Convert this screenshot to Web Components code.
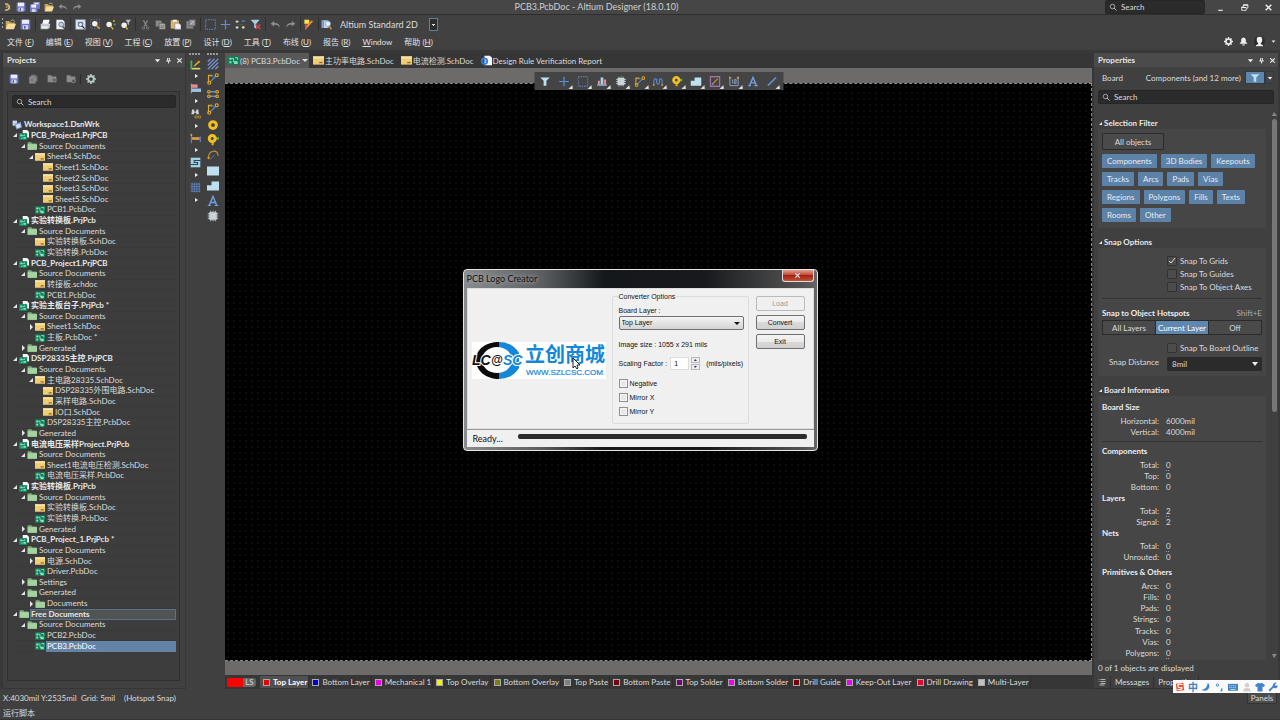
<!DOCTYPE html>
<html lang="zh">
<head>
<meta charset="utf-8">
<title>PCB3.PcbDoc - Altium Designer (18.0.10)</title>
<style>
html,body{margin:0;height:100%;background:#404040}
body{font:8px/10px Lato,"Noto Sans CJK SC",sans-serif;color:#dcdcdc;overflow:hidden}
</style>
</head>
<body>
<ad-app></ad-app>
<script>
const base = `*{box-sizing:border-box}
button,input,select{font:inherit;color:inherit;background:none;border:0;padding:0;margin:0;border-radius:0}
:focus{outline:none}
button{display:flex;align-items:center;justify-content:center;white-space:nowrap}`;

function define(name, css, html) {
  customElements.define(name, class extends HTMLElement {
    constructor() {
      super();
      this.attachShadow({ mode: 'open' });
    }
    connectedCallback() {
      const body = typeof html === 'function' ? html(this) : html;
      this.shadowRoot.innerHTML = `<style>${base}${css}</style>${body}`;
    }
  });
}

const Y = '#e8a91c', B = '#5b8fd6', L = '#bfe0ee', W = '#f0f0f0', G = '#8d8d8d';
const icons = {
  logo: `<path d="M4 2h5l4 4v5l-4 3H4l2-3h3l1-2V7L8 5H6z" fill="#cdb56c"/><path d="M6 7h3v2H6z" fill="#cdb56c"/>`,
  save: `<path d="M1 1h14v14H1z" fill="#6f74c8"/><path d="M3 1h10v6H3z" fill="#eceefa"/><path d="M4 9h8v6H4z" fill="#d3d6ee"/><path d="M6 10h2v4H6z" fill="#4a4e96"/>`,
  saveall: `<path d="M5 0h11v11H5z" fill="#6f74c8"/><path d="M7 1h7v3H7z" fill="#dfe2f5"/><path d="M0 4h12v12H0z" fill="#6f74c8"/><path d="M2 4h8v5H2z" fill="#eceefa"/><path d="M3 11h6v5H3z" fill="#d3d6ee"/>`,
  open: `<path d="M1 3h5l2 2h6v3H5l-3 6H1z" fill="#c9a55b"/><path d="M4 7h12l-3 8H1z" fill="#f5dc98"/><path d="M8 3q4-4 6 1" stroke="#d8d8d8" fill="none"/>`,
  undo: `<path d="M6 3 1 7l5 4V8.500q6-1 8 4.500 1-7-8-7.500z" fill="${G}"/>`,
  redo: `<path d="M10 3l5 4-5 4V8.500q-6-1-8 4.500-1-7 8-7.500z" fill="${G}"/>`,
  print: `<path d="M5 1h9l-2 7H3z" fill="#fafafa"/><path d="M1 7h14l-1 6-3 2H1z" fill="#c3c8d3"/><path d="M2 11h9v2H2z" fill="#f7f7f7"/>`,
  preview: `<path d="M2 1h9l3 3v11H2z" fill="#f0f2f8"/><circle cx="9" cy="8" r="3.500" fill="#b9d3ef" stroke="#555"/><path d="m11 11 4 4" stroke="#444" stroke-width="2"/>`,
  zoomdoc: `<path d="M1 1h14v14H1z" fill="#e7ecf5" stroke="#7e9cc4"/><path d="M4 4h8v7H4z" fill="#6f8fb8"/><circle cx="8" cy="8" r="3" fill="#dcebfa" stroke="#456"/><path d="m10 10 4 4" stroke="#333" stroke-width="2"/>`,
  zoomarea: `<path d="M1 1h13v13H1z" fill="none" stroke="#6c8fd0" stroke-dasharray="2"/><circle cx="7" cy="7" r="4" fill="${W}"/><path d="m9 9 5 5" stroke="#e2b04a" stroke-width="2"/>`,
  zoomsel: `<circle cx="6" cy="8" r="4" fill="${W}"/><path d="m8 10 4 5" stroke="#e2b04a" stroke-width="2"/><circle cx="13" cy="3" r="1.500" fill="${Y}"/><circle cx="14" cy="8" r="1.500" fill="#5a5"/>`,
  zoomfil: `<circle cx="6" cy="9" r="4" fill="${W}"/><path d="m8 11 3 4" stroke="#e2b04a" stroke-width="2"/><path d="M8 1h8l-3 4v4l-2-2V5z" fill="#b9bfc8"/>`,
  cut: `<path d="m5 2 5 9m1-9-5 9" stroke="${G}" stroke-width="1.500"/><circle cx="5" cy="13" r="1.800" fill="none" stroke="${G}"/><circle cx="11" cy="13" r="1.800" fill="none" stroke="${G}"/>`,
  copy: `<path d="M1 2h7l2 2v7H1z" fill="#8a8a8a"/><path d="M6 6h7l2 2v7H6z" fill="#aaa" stroke="#555"/><path d="M8 10h5M8 12h5" stroke="#666"/>`,
  paste: `<path d="M1 2h12v12H1z" fill="#ddb567"/><path d="M4 1h6v3H4z" fill="#eee"/><path d="M7 6h6l3 3v6H7z" fill="#f2f4fa" stroke="#889"/>`,
  stamp: `<path d="M2 3h10v11H2z" fill="#858585"/><path d="M6 1h9v9H6z" fill="#999" stroke="#555"/><path d="m8 8 5-5" stroke="#ddd"/>`,
  selrect: `<path d="M1 1h14v14H1z" fill="none" stroke="#6487cf" stroke-width="1.500" stroke-dasharray="2 1.500"/>`,
  cross: `<path d="M8 1v14M1 8h14" stroke="${B}" stroke-width="1.800"/>`,
  xsel: `<path d="M3 2v3M3 11v3M1 4h4M1 12h4" stroke="#ddd" stroke-width="2"/><path d="M10 3h4M12 11v3" stroke="${B}" stroke-width="2"/><circle cx="12" cy="12" r="2" fill="#d8cf7a"/><path d="M4 8h7" stroke="#7a7" stroke-dasharray="1 2"/>`,
  clearfil: `<path d="M1 1h13L9 7v7l-3-2V7z" fill="#a9cbe0"/><path d="m8 8 7 7m0-7-7 7" stroke="#d8434a" stroke-width="2"/>`,
  marker: `<path d="M2 1h7v6H2z" fill="#ffe14a"/><path d="M15 3 7 12l-4 4 1-6 8-8z" fill="#ee8a3a"/><path d="m3 8 3 4" stroke="#e35b4b" stroke-width="2"/>`,
  browse: `<path d="M1 2h10v11H1z" fill="#cfdcf0"/><path d="M3 2v11" stroke="#557fc0" stroke-width="2"/><circle cx="10" cy="7" r="4" fill="#e6f1fb" stroke="#6b87aa"/><path d="m12 10 3 5" stroke="#e2903a" stroke-width="2"/>`,
  search: `<circle cx="7" cy="7" r="4.500" fill="none" stroke="#c8c8c8" stroke-width="1.500"/><path d="m10 10 5 5" stroke="#c8c8c8" stroke-width="1.800"/>`,
  min: `<path d="M4 12h8v2H4z" fill="${W}"/>`,
  restore: `<path d="M6 3h8v6h-3v4H3V7h3z" fill="none" stroke="${W}" stroke-width="1.500"/><path d="M6 3h8v2H6zM3 7h8v2H3z" fill="${W}"/>`,
  close: `<path d="m3 3 10 10M13 3 3 13" stroke="${W}" stroke-width="2.500"/>`,
  gear: `<circle cx="8" cy="8" r="4.500" fill="none" stroke="currentColor" stroke-width="3"/><path d="M8 0v3M8 13v3M0 8h3M13 8h3M2.500 2.500l2 2M11.500 11.500l2 2M13.500 2.500l-2 2M4.500 11.500l-2 2" stroke="currentColor" stroke-width="2.500"/>`,
  bell: `<path d="M8 1q5 1 4 7l3 4H1l3-4Q3 2 8 1z" fill="${W}"/><path d="M6 13h4v2H6z" fill="${W}"/>`,
  user: `<circle cx="8" cy="8" r="8" fill="#2c2c2c"/><path d="M8 1q4.500 0 4 5 0 3-2 4v2l3 1v2H3v-2l3-1v-2Q4 9 4 6 3.500 1 8 1z" fill="${W}"/>`,
  pin: `<path d="M5 2h6v6h2v2H9v5H7v-5H3V8h2z" fill="${W}"/><path d="M7 3h2v5H7z" fill="#555"/>`,
  down: `<path d="M2 5h12l-6 7z" fill="${W}"/>`,
  docs: `<path d="M5 1h7l3 3v8H5z" fill="#777"/><path d="M2 4h7l3 3v8H2z" fill="${G}"/><path d="M4 8h5M4 11h5" stroke="#555"/>`,
  folderx: `<path d="M1 2h6l1 2h7v9H1z" fill="#8b8b8b"/><path d="m8 9 4-3v2h4v3h-4v2z" fill="#666"/>`,
  folderm: `<path d="M1 2h6l1 2h7v9H1z" fill="#8b8b8b"/><circle cx="12" cy="11" r="3" fill="#555" stroke="#999"/>`,
  work: `<path d="M1 1h7v8H1z" fill="#cdd7ee"/><path d="m4 6 10-3 2 9-9 3z" fill="#7f9bd0"/><path d="m6 8 7-2 1 5-6 2z" fill="#d9e4f7"/>`,
  project: `<path d="M6 0h7l3 3v9H6z" fill="#f4f6f5"/><path d="M0 5h13v11H0z" fill="#0f8a5f"/><path d="M2 7h3v3H2zM7 11h4v3H7z" fill="#8fe0bb"/><path d="M5 9h4V7M3 13h3" stroke="#d4f5e5" fill="none"/>`,
  pcb: `<path d="M0 2h16v12H0z" fill="#0f7f58"/><path d="M2 4h3v3H2zM2 9h3v3H2zM9 9h5v4H9z" fill="#8fe0bb"/><path d="M5 5h3v5h2M10 4h4v3" stroke="#d4f5e5" fill="none"/>`,
  sch: `<path d="M0 2h16v12H0z" fill="#f0cd74"/><path d="M0 2h16v3H0z" fill="#f8e3a8"/><path d="M9 10h5v2H9z" fill="#86683a"/>`,
  folder: `<path d="M1 2h6l1 2h7v10H1z" fill="#7fae7c"/><path d="M1 5h15v9H1z" fill="#a5d3a0"/>`,
  report: `<path d="M5 1h8l3 3v11H5z" fill="#f6f6fb"/><circle cx="5" cy="9" r="4" fill="none" stroke="#2f7fdc" stroke-width="2.500"/><path d="M3 9h5" stroke="#2f7fdc" stroke-width="1.500"/>`,
  measure: `<path d="M2 2v12h12" stroke="#3fb65b" stroke-width="2.500" fill="none"/><path d="m5 10 8-8 2 2-8 7z" fill="${Y}"/><path d="M3 13h12v2H3z" fill="#eacb6a"/>`,
  align: `<path d="M2 1v14" stroke="#ccc"/><path d="M2 2h9v5H2z" fill="#e88a8f"/><path d="M2 8h14v5H2z" fill="#9cc3e6"/>`,
  binoc: `<path d="M3 2h3v3h3V2h3l1 7H9V7H6v2H2z" fill="#cdd3d8"/><circle cx="9" cy="13" r="1.800" fill="none" stroke="${Y}"/><circle cx="14" cy="13" r="1.800" fill="none" stroke="${Y}"/>`,
  dims: `<path d="M2 1v14M15 5v8" stroke="${B}" stroke-width="1.500"/><path d="M3 6h11v4H3z" fill="#e09a45"/><circle cx="2" cy="3" r="1.500" fill="${Y}"/>`,
  poly: `<path d="M1 1h14v14H1z" fill="#9fd0e8"/><path d="M15 5H6v3h5v3H1" stroke="#2f4656" stroke-width="1.500" fill="none"/>`,
  grid: `<path d="M1 3h14M1 6.500h14M1 10h14M1 13.500h14M3 1v14M6.500 1v14M10 1v14M13.500 1v14" stroke="#5f84c4" stroke-width="1.200"/>`,
  hatch: `<path d="M1 5l4-4M1 10l9-9M1 15 15 1M6 15l9-9M11 15l4-4" stroke="#7394cc" stroke-width="1.600"/>`,
  route: `<path d="m4 12 8-8M3 4h6" stroke="${B}" stroke-width="1.500"/><path d="M2 13V3h5" fill="none" stroke="${Y}" stroke-width="1.500"/><circle cx="3" cy="13" r="2" fill="none" stroke="${Y}" stroke-width="1.500"/><circle cx="13" cy="3" r="2" fill="none" stroke="${Y}" stroke-width="1.500"/>`,
  diff: `<path d="M4 5h8M4 11h8" stroke="${B}" stroke-width="1.800"/><g fill="none" stroke="${Y}" stroke-width="1.500"><circle cx="2.500" cy="5" r="1.700"/><circle cx="13.500" cy="5" r="1.700"/><circle cx="2.500" cy="11" r="1.700"/><circle cx="13.500" cy="11" r="1.700"/></g>`,
  pad: `<circle cx="8" cy="8" r="4.500" fill="none" stroke="#f0c020" stroke-width="4"/>`,
  via: `<path d="M9 6h7" stroke="#4dbd52" stroke-width="3"/><path d="M6 9h3v6H6z" fill="#e0a818"/><circle cx="7" cy="6" r="4" fill="none" stroke="#f0c020" stroke-width="4"/>`,
  arc: `<path d="M2 12Q2 4 8 3t7 6" fill="none" stroke="#c4923c" stroke-width="1.500"/><path d="m4 14 6-6" stroke="${B}"/><circle cx="2" cy="12" r="1.500" fill="${Y}"/>`,
  rect: `<path d="M0 2h16v12H0z" fill="${L}"/>`,
  shape: `<path d="M0 7h6V2h10v12H0z" fill="${L}"/>`,
  text: `<path d="m3 14 5-12 5 12M5 10h6" stroke="#6f9fe0" stroke-width="2" fill="none"/><path d="M1 14h4M10 14h5" stroke="#6f9fe0" stroke-width="1.500"/>`,
  chip: `<path d="M3 3h10v10H3z" fill="#d5dde0"/><path d="M1 5h14M1 8h14M1 11h14M5 1v14M8 1v14M11 1v14" stroke="#c6d0d4" stroke-width="1.300"/>`,
  funnel: `<path d="M1 2h14l-5 5v7H6V7z" fill="${L}"/>`,
  bars: `<path d="M1 13h14" stroke="#9bb6df" stroke-width="2"/><path d="M2 7h3v5H2zM11 5h3v7h-3z" fill="#e88a8f"/><path d="M6 2h4v10H6z" fill="#a5d5ea"/>`,
  wave: `<path d="M2 12V7q1-5 4-2v5q2 4 4 0V5q3-3 4 2v5" stroke="${B}" stroke-width="1.500" fill="none"/><circle cx="2" cy="13" r="1.300" fill="${Y}"/><circle cx="14" cy="13" r="1.300" fill="${Y}"/>`,
  keep: `<path d="M1 1h14v14H1z" fill="none" stroke="#cc7fc4" stroke-width="1.500"/><path d="m4 12 8-8" stroke="${Y}" stroke-width="1.500"/><circle cx="4.500" cy="11.500" r="1.500" fill="${B}"/>`,
  dim: `<path d="M2 2v12h12V2M1 3h3M12 3h3M6 5v6M9 5h2v6H9z" fill="none" stroke="#8fa6c8" stroke-width="1.300"/><circle cx="2" cy="2" r="1.300" fill="${Y}"/><circle cx="14" cy="2" r="1.300" fill="${Y}"/>`,
  line: `<path d="M2 14 14 2" stroke="${B}" stroke-width="2.200"/>`,
  list: `<path d="M5 3h10M5 7h10M5 11h10M3 14h10" stroke="#ddd" stroke-width="1.500"/><path d="m1 2 2 2M1 7h2" stroke="#ddd"/>`,
  sogou: `<path d="M2 2h12v12H2z" transform="rotate(-8 8 8)" fill="#e8542c"/><path d="M12 4Q4 2 4.500 6T11 9q1 4-7 3" fill="none" stroke="#fff" stroke-width="2"/>`,
  moon: `<path d="M11 1q5 6 0 11-5 4-10 0 8 0 10-11z" fill="#3f83c8"/>`,
  punct: `<circle cx="4" cy="5" r="2" fill="none" stroke="#3f83c8" stroke-width="1.500"/><path d="M11 10v3l-2 2" stroke="#3f83c8" stroke-width="2" fill="none"/>`,
  kbd: `<path d="M0 3h16v11H0z" fill="#3f83c8"/><path d="M2 6h12M2 9h12" stroke="#fff" stroke-dasharray="2 1"/><path d="M4 12h8" stroke="#fff"/>`,
  person: `<circle cx="8" cy="5" r="3.500" fill="#d0d0d0"/><path d="M2 15q0-6 6-6t6 6z" fill="#d0d0d0"/>`,
  shirt: `<path d="M5 1q3 2 6 0l5 4-2 3-2-1v8H4V7L2 8 0 5z" fill="#3f83c8"/>`,
  wrench: `<path d="m2 14 7-7" stroke="#3f83c8" stroke-width="3"/><path d="M14 1 11 4l1 2 3-1q1 5-4 5-5-1-3-6 2-4 6-3z" fill="#3f83c8"/>`
};
define('ad-icon', `:host{display:block;width:var(--s,12px);height:var(--s,12px);flex:none}svg{display:block;width:100%;height:100%}`,
  el => `<svg viewBox="0 0 16 16" aria-hidden="true">${icons[el.getAttribute('name')] || ''}</svg>`);
const ic = n => `<ad-icon name="${n}"></ad-icon>`;
const tool = n => `<button aria-label="${n}">${ic(n)}</button>`;

define('ad-search', `:host{display:block}
label{display:flex;align-items:center;height:100%;background:#2b2b2b;border:1px solid #262626;border-radius:2px;padding:0 3px;gap:4px;--s:8px}
input{flex:1;min-width:0;height:10px;line-height:10px;color:#dcdcdc}input::placeholder{color:#dcdcdc;opacity:1}`,
  `<label>${ic('search')}<input type="text" placeholder="Search" aria-label="Search"></label>`);

define('ad-titlebar', `:host{display:flex;align-items:center;height:15px;background:#464646;border-bottom:1px solid #2e2e2e;--s:10px}
.q{display:flex;width:88px}.q button{width:14px;height:14px}h1{flex:1;font:inherit;margin:0;text-align:center;color:#d0d0d0;font-size:9px}
ad-search{width:100px;height:14px}.w{display:flex;width:75px;padding-left:3px;--s:9px}.w button{width:24px;height:14px}`,
  `<div class="q">${['logo','save','saveall','open','undo','redo'].map(tool).join('')}</div>
   <h1>PCB3.PcbDoc - Altium Designer (18.0.10)</h1><ad-search></ad-search>
   <div class="w">${['min','restore','close'].map(tool).join('')}</div>`);

const groups = [['open','save'],['print','preview'],['zoomdoc','zoomarea','zoomsel','zoomfil'],['cut','copy','paste','stamp'],['selrect','cross','xsel','clearfil'],['undo','redo']];
define('ad-toolbar', `:host{display:flex;align-items:center;height:18px;background:#414141;--s:11px}
button{width:15px;height:18px}i{width:5px;height:14px;background:linear-gradient(#2f2f2f,#2f2f2f) 2px 0/1px 100% no-repeat}i.t{width:3px}
.grip{width:3px;height:12px;background:repeating-linear-gradient(#aaa 0 2px,transparent 2px 4px) 2px 0/1px 100% no-repeat}
label{display:flex;margin-left:6px}select{appearance:none;width:98px;height:13px;font-size:9px;line-height:13px;background:linear-gradient(#ddd,#ddd) 92px 6px/3px 1px no-repeat,linear-gradient(#ddd,#ddd) 93px 7px/1px 1px no-repeat,linear-gradient(#2c2c2c,#2c2c2c) 90px 1px/7px 11px no-repeat,linear-gradient(#5d7f9f,#5d7f9f) 89px 0/9px 13px no-repeat}`,
  `<span class="grip"></span>${groups.map(g => g.map(tool).join('')).join('<i></i>')}<i class="t"></i>${tool('marker')}<i class="t"></i>${tool('browse')}
   <label><select aria-label="View configuration"><option>Altium Standard 2D</option></select></label>`);

const menus = [['文件','F'],['编辑','E'],['视图','V'],['工程','C'],['放置','P'],['设计','D'],['工具','T'],['布线','U'],['报告','R'],['','Window'],['帮助','H']];
define('ad-menubar', `:host{display:flex;align-items:center;height:17px;background:#414141;padding:0 1px}
nav{display:flex;flex:1}nav button{padding:0 6px;height:14px;white-space:pre;color:#e2e2e2}
.r{display:flex;align-items:center;gap:6px;padding-right:3px;color:#f0f0f0;--s:9px}.r button:nth-child(3){--s:11px}.r button:last-child{--s:5px}`,
  `<nav>${menus.map(([a,b]) => a ? `<button>${a} (<u>${b}</u>)</button>` : `<button><u>W</u>indow</button>`).join('')}</nav>
   <div class="r">${['gear','bell','user','down'].map(tool).join('')}</div>`);

define('ad-panel-head', `:host{display:flex;align-items:center;height:14px;padding:0 0 0 4px;background:#4b4b4b;--s:7px}
h2{flex:1;margin:0;font:bold 8px/10px Lato,sans-serif;color:#e6e6e6}button{width:11px;height:11px}`,
  `<h2><slot></slot></h2>${['down','pin','close'].map(tool).join('')}`);

const tree = `0 - work Workspace1.DsnWrk|0 v project PCB_Project1.PrjPCB|1 v folder Source Documents|2 v sch Sheet4.SchDoc|3 - sch Sheet1.SchDoc|3 - sch Sheet2.SchDoc|3 - sch Sheet3.SchDoc|3 - sch Sheet5.SchDoc|2 - pcb PCB1.PcbDoc|0 v project 实验转换板.PrjPcb|1 v folder Source Documents|2 - sch 实验转换板.SchDoc|2 - pcb 实验转换.PcbDoc|0 v project PCB_Project1.PrjPCB|1 v folder Source Documents|2 - sch 转接板.schdoc|2 - pcb PCB1.PcbDoc|0 v project 实验主板台子.PrjPcb *|1 v folder Source Documents|2 > sch Sheet1.SchDoc|2 - pcb 主板.PcbDoc *|1 > folder Generated|0 v project DSP28335主控.PrjPCB|1 v folder Source Documents|2 v sch 主电路28335.SchDoc|3 - sch DSP28335外围电路.SchDoc|3 - sch 采样电路.SchDoc|3 - sch IO口.SchDoc|2 - pcb DSP28335主控.PcbDoc|1 > folder Generated|0 v project 电流电压采样Project.PrjPcb|1 v folder Source Documents|2 - sch Sheet1电流电压检测.SchDoc|2 - pcb 电流电压采样.PcbDoc|0 v project 实验转换板.PrjPcb|1 v folder Source Documents|2 - sch 实验转换板.SchDoc|2 - pcb 实验转换.PcbDoc|1 > folder Generated|0 v project PCB_Project_1.PrjPcb *|1 v folder Source Documents|2 > sch 电源.SchDoc|2 - pcb Driver.PcbDoc|1 > folder Settings|1 v folder Generated|2 > folder Documents|0 v folder Free Documents|1 v folder Source Documents|2 - pcb PCB2.PcbDoc|2 - pcb PCB3.PcbDoc`
  .split('|').map(r => { const m = r.match(/^(\d) (\S) (\S+) (.*)$/); return { lv: m[1], st: m[2], icon: m[3], text: m[4] }; });
define('ad-tree-item', `:host{display:flex;align-items:center;min-height:0;padding-left:calc(var(--lv)*8px);border-bottom:1px solid #393939;--s:10px}
:host([icon=work]) .a{width:0;margin:0}.a{width:6px;height:6px;margin-right:1px;flex:none}.a path{fill:#e8e8e8}
span{flex:1;height:11px;line-height:11px;padding-left:1px;margin-left:1px;white-space:nowrap}
:host([top]) span{font-weight:bold;color:#e8e8e8}
:host([free]) span{background:#505452;box-shadow:inset 0 0 0 1px #58728c}:host([sel]) span{background:#6384a6;color:#fff}`,
  el => `<svg class="a" viewBox="0 0 6 6">${{ v: '<path d="M5 1v4H1z"/>', '>': '<path d="M2 0l3 3-3 3z"/>' }[el.getAttribute('state')] || ''}</svg>${ic(el.getAttribute('icon'))}<span><slot></slot></span>`);
define('ad-projects', `:host{display:flex;flex-direction:column;width:184px;background:#404040;border:1px solid #363636;border-width:0 1px 1px}
.t{display:flex;align-items:center;height:24px;padding-left:1px;--s:10px;color:#b9cdc9}.t button{width:19px;height:14px}.t i{width:1px;height:10px;background:#2c2c2c;margin:0}
.f{flex:1;min-height:0;display:flex;flex-direction:column;margin:0 5px 7px 4px;padding:3px 3px 28px 4px;background:#3d3d3d;border:1px solid #303030}
ad-search{height:13px;margin-bottom:12px}.l{flex:1;min-height:0;display:grid;grid-auto-rows:minmax(0,1fr)}`,
  `<ad-panel-head>Projects</ad-panel-head>
   <div class="t">${['save','docs','folderx','folderm'].map(tool).join('')}<i></i>${tool('gear')}</div>
   <div class="f"><ad-search></ad-search><div class="l" role="tree">${tree.map((r, i) =>
     `<ad-tree-item role="treeitem" style="--lv:${r.lv}" state="${r.st}" icon="${r.icon}" ${r.lv === '0' ? 'top' : ''} ${r.text.startsWith('Free') ? 'free' : ''} ${i === tree.length - 1 ? 'sel' : ''}>${r.text}</ad-tree-item>`).join('')}</div></div>`);

define('ad-side-tools', `:host{display:flex;width:39px;background:#404040;align-items:flex-start}
.c{width:18px}.g{height:2px;margin:0 3px;background:repeating-linear-gradient(90deg,#999 0 2px,transparent 2px 3px)}
.x,.y{display:grid;grid-auto-rows:1fr;justify-items:center;align-items:center;--s:12px}.x{height:148px;margin-top:3px;--s:11px}.y{height:168px;margin-top:1px}
.x button:nth-child(even){padding-left:2px}`,
  `<div class="c"><div class="g"></div><div class="x">${['measure','align','binoc','dims','poly','grid'].map(n => tool(n) + `<button aria-label="more"><svg width="3" height="4"><path d="M0 0l3 2-3 2z" fill="#eee"/></svg></button>`).join('')}</div></div>
   <div class="c"><div class="g"></div><div class="y">${['hatch','route','diff','route','pad','via','arc','rect','shape','text','chip'].map(tool).join('')}</div></div>`);

define('ad-float-tools', `:host{display:flex;background:#444;padding:0 2px;height:18px;--s:11px}
button{width:18px;flex:1;position:relative}button.m::after{content:"";position:absolute;right:1px;bottom:1px;border:2px solid;border-color:transparent #ddd #ddd transparent}`,
  ['funnel','cross','selrect','bars','chip','route','wave','via','shape','keep','dim','text','line'].map(n => `<button aria-label="${n}" class="${['funnel','text'].includes(n) ? '' : 'm'}">${ic(n)}</button>`).join(''));

define('ad-doc-tab', `:host{display:flex;align-items:center;height:15px;padding:0 3px;white-space:nowrap;--s:11px}
button{gap:1px;height:15px}:host([on]){background:#585858;padding-right:1px}:host([on]) button::after{content:"";border:3px solid transparent;border-top-color:#ddd;border-bottom:0;margin-left:1px}`,
  el => `<button role="tab">${ic(el.getAttribute('icon'))}<slot></slot></button>`);
define('ad-layer-tab', `:host{display:block;border-right:1px solid #2d2d2d;height:12px}
button{height:12px;gap:3px;padding:0 1px 0 3px}i{width:7px;height:7px;background:var(--c);border:1px solid #aaa}:host([on]){background:#505050;font-weight:bold;color:#fff}`,
  `<button role="tab"><i></i><slot></slot></button>`);
const layers = [['#e80000','Top Layer'],['#0000d8','Bottom Layer'],['#e800e8','Mechanical 1'],['#f4f400','Top Overlay'],['#7d7d0c','Bottom Overlay'],['#7f7f7f','Top Paste'],['#78000c','Bottom Paste'],['#78007c','Top Solder'],['#f000f0','Bottom Solder'],['#78000c','Drill Guide'],['#f000f0','Keep-Out Layer'],['#f00028','Drill Drawing'],['#c0c0c0','Multi-Layer']];
define('ad-editor', `:host{display:flex;flex-direction:column;flex:1;min-width:0;background:#363636}
.d{display:flex;height:15px;gap:1px}
.v{flex:1;min-height:0;display:flex;flex-direction:column;background:#6d6b6a;padding:15px 0 14px;position:relative}
.b{flex:1;border:1px dashed #888;border-left:0;background-color:#000;background-image:radial-gradient(#0d0d0d 1px,transparent 1px);background-size:6px 6px}
ad-float-tools{position:absolute;top:4px;left:50%;width:249px;transform:translateX(-50%)}
.y{display:flex;align-items:center;height:14px;padding-left:2px}.y .r{width:16px;height:9px;background:#f00}.y .ls{height:9px;width:13px;background:#666;border-radius:0 3px 3px 0;margin-right:4px}`,
  `<div class="d"><ad-doc-tab on icon="pcb">(8) PCB3.PcbDoc</ad-doc-tab><ad-doc-tab icon="sch">主功率电路.SchDoc</ad-doc-tab><ad-doc-tab icon="sch">电流检测.SchDoc</ad-doc-tab><ad-doc-tab icon="report">Design Rule Verification Report</ad-doc-tab></div>
   <div class="v"><div class="b"></div><ad-float-tools></ad-float-tools></div>
   <div class="y"><span class="r"></span><button class="ls">LS</button>${layers.map(([c,t], i) => `<ad-layer-tab style="--c:${c}" ${i ? '' : 'on'}>${t}</ad-layer-tab>`).join('')}</div>`);

define('ad-section', `:host{display:block;margin-bottom:8px}h3{display:flex;align-items:center;gap:1px;font:bold 8px/10px Lato,sans-serif;color:#e8e8e8;margin:0;height:12px}
h3 svg{width:5px;height:5px}.b{background:#464646;padding:4px 4px 3px}`,
  el => `<h3><svg viewBox="0 0 5 5"><path d="M4 1v3H1z" fill="#eee"/></svg>${el.getAttribute('heading')}</h3><div class="b"><slot></slot></div>`);
define('ad-check', `:host{display:block;padding-left:65px}label{display:flex;align-items:center;gap:3px;height:13px;white-space:nowrap}
input{appearance:none;width:10px;height:10px;border:1px solid #333;background:#4c4c4c;border-radius:1px;margin:0}
input:checked{background:#4c4c4c url("data:image/svg+xml,%3Csvg xmlns='http://www.w3.org/2000/svg' viewBox='0 0 8 8'%3E%3Cpath d='M1 4l2 2 4-5' fill='none' stroke='%23ddd'/%3E%3C/svg%3E")}`,
  el => `<label><input type="checkbox" ${el.hasAttribute('checked') ? 'checked' : ''}><slot></slot></label>`);
define('ad-stats', `:host{display:block}h4{margin:0;font:bold 8px/10px Lato,sans-serif;color:#eee}
table{border-collapse:collapse;border-spacing:0;width:100%}th,td{padding:0;font-weight:normal;line-height:10px}th{width:57px;text-align:right}td{padding-left:7px}
a{color:inherit;text-decoration:underline dotted #8ab;text-underline-offset:2px}`,
  el => { const rows = el.getAttribute('rows').split(',').map(r => r.split('='));
    return `<h4>${el.getAttribute('heading')}</h4><table style="height:${Math.round(rows.length * 34 / 3)}px;margin-top:${el.getAttribute('gap')}px">${rows.map(([k,v]) => `<tr><th scope="row">${k}:</th><td>${v[0] === '_' ? `<a href="#">${v.slice(1)}</a>` : v}</td></tr>`).join('')}</table>`; });

const chips = [['Components','3D Bodies','Keepouts'],['Tracks','Arcs','Pads','Vias'],['Regions','Polygons','Fills','Texts'],['Rooms','Other']];
define('ad-properties', `:host{display:flex;flex-direction:column;width:185px;margin:0 2px 0 1px;background:#404040;border-left:1px solid #353535}
.o{display:flex;align-items:center;height:21px;padding:0 4px 0 8px}.o span:nth-child(2){margin-left:auto;margin-right:4px}
.o button{height:13px;width:20px;background:#5f86ad;border:1px solid #2e3a45;--s:10px}.o button+button{width:9px;background:#444;--s:6px}
ad-search{height:14px;margin:2px 4px 8px}
.m{flex:1;min-height:0;display:flex;overflow:hidden}.s{flex:1;min-width:0;overflow:hidden;padding:5px 4px 0 4px}
.bar{width:8px;display:flex;flex-direction:column;align-items:center;padding-bottom:2px}.bar i{width:5px;flex:1;margin:3px 0 242px;background:#777;border-radius:3px}
.c{display:flex;flex-direction:column;gap:4px;padding-bottom:3px}.c div{display:flex;gap:4px}.c button{height:14px;padding:0 5px;background:#5c82a8;border-radius:1px;color:#e4ecf4}
.all{width:62px;height:17px;border:1px solid #2b2b2b;background:#4a4a4a;border-radius:1px;margin-bottom:4px}
hr{border:0;border-top:1px solid #333;margin:5px 0 4px}
.h{display:flex;justify-content:space-between;margin:9px 0 2px}.h b{color:#eee}.h span{color:#aaa}
.seg{display:flex;height:15px;border:1px solid #2b2b2b;margin-bottom:6px}.seg button{flex:1;background:#4a4a4a}.seg button:nth-child(2){background:#5f86ad;color:#fff;border:1px solid #2b2b2b;border-width:0 1px}
.k{display:flex;gap:8px;margin-top:3px;padding-bottom:2px}.k span{width:57px;text-align:right}.k select{appearance:none;height:14px;line-height:14px;padding-left:5px;background:#2b2b2b;border-radius:1px;width:100%}
.k label{display:contents}.k div{flex:1;display:flex;position:relative}.k svg{position:absolute;right:4px;top:5px}
.x{height:10px;line-height:10px;margin:3px 0 3px 4px}
.t{display:flex;height:13px}.t button{border:1px solid #303030;border-width:0 1px 1px 0;padding:0 4px;--s:8px}.t button:last-child{background:#404040}`,
  `<ad-panel-head>Properties</ad-panel-head>
   <div class="o"><span>Board</span><span>Components (and 12 more)</span>${tool('funnel')}${tool('down')}</div>
   <ad-search></ad-search>
   <div class="m"><div class="s">
     <ad-section heading="Selection Filter"><button class="all">All objects</button><div class="c">${chips.map(r => `<div>${r.map(c => `<button>${c}</button>`).join('')}</div>`).join('')}</div></ad-section>
     <ad-section heading="Snap Options"><div style="padding-top:2px"><ad-check checked>Snap To Grids</ad-check><ad-check>Snap To Guides</ad-check><ad-check>Snap To Object Axes</ad-check></div><hr>
       <div class="h"><b>Snap to Object Hotspots</b><span>Shift+E</span></div>
       <div class="seg"><button>All Layers</button><button>Current Layer</button><button>Off</button></div>
       <ad-check>Snap To Board Outline</ad-check>
       <div class="k"><label><span>Snap Distance</span><div><select><option>8mil</option></select><svg width="6" height="4"><path d="M0 0h6L3 4z" fill="#eee"/></svg></div></label></div></ad-section>
     <ad-section heading="Board Information"><div style="padding-top:2px"><ad-stats heading="Board Size" gap="3" rows="Horizontal=6000mil,Vertical=4000mil"></ad-stats></div><hr style="margin:3px 0 4px">
       <ad-stats heading="Components" gap="3" rows="Total=_0,Top=0,Bottom=0"></ad-stats>
       <ad-stats heading="Layers" gap="2" rows="Total=_2,Signal=2"></ad-stats>
       <ad-stats heading="Nets" gap="2" rows="Total=_0,Unrouted=0"></ad-stats>
       <ad-stats heading="Primitives &amp; Others" gap="3" rows="Arcs=0,Fills=0,Pads=0,Strings=0,Tracks=0,Vias=0,Polygons=_0" style="padding-top:4px"></ad-stats></ad-section>
   </div><div class="bar"><svg width="5" height="4"><path d="M0 4h5L2 0z" fill="#888"/></svg><i></i><svg width="5" height="4"><path d="M0 0h5L2 4z" fill="#888"/></svg></div></div>
   <div class="x">0 of 1 objects are displayed</div>
   <div class="t"><button aria-label="Panel list">${ic('list')}</button><button>Messages</button><button>Properties</button></div>`);

define('ad-status', `:host{display:block;height:31px;background:#404040;border-bottom:1px solid #353535}
div{display:flex;align-items:center;padding-left:3px;height:13px}.a{height:17px;padding-right:3px}.a span:nth-child(1){width:78px}.a span:nth-child(2){width:43px}
button{margin-left:auto;height:13px;width:30px;background:#4c4c4c;border:1px solid #333;border-radius:1px}`,
  `<div class="a"><span>X:4030mil Y:2535mil</span><span>Grid: 5mil</span><span>(Hotspot Snap)</span><button>Panels</button></div><div>运行脚本</div>`);

define('ad-ime', `:host{display:flex;align-items:center;justify-content:space-around;width:107px;height:13px;background:#fafafa;color:#3f83c8;--s:10px}span{font-size:10px;line-height:12px;font-weight:bold}`,
  `${ic('sogou')}<span>中</span>${['moon','punct','kbd','person','shirt','wrench'].map(ic).join('')}`);

define('ad-logo', `:host{display:block}svg{display:block;overflow:visible}`,
  `<svg width="134" height="37" role="img" aria-label="立创商城"><path d="M0 0h134v37H0z" fill="#fff"/>
   <path d="M27 0C14 0 4 7 4 18s10 19 23 19z" fill="#0b0b0b"/><path d="M27 0q13 0 20 11v15q-7 11-20 11z" fill="#1488d8"/><ellipse cx="25" cy="18" rx="15" ry="13" fill="#fff"/>
   <g font-family="Liberation Sans" font-style="italic" font-weight="bold" stroke="#fff" stroke-width="2" paint-order="stroke"><text x="0" y="23" font-size="14" fill="#111">LC</text><text x="31" y="23" font-size="14" fill="#1488d8">SC</text><text x="19" y="22" font-size="12" fill="#111" stroke="none">@</text></g>
   <text x="53" y="20" font-family="Noto Sans CJK SC" font-weight="bold" font-size="20" fill="#1488d8">立创商城</text>
   <text x="54" y="33" font-family="Liberation Sans" font-size="8" fill="#1488d8" stroke="#1488d8" stroke-width=".2">WWW.SZLCSC.COM</text></svg>`);
define('ad-dialog', `:host{display:flex;flex-direction:column;width:355px;height:182px;border:1px solid #e6e6e6;border-radius:4px;padding:0 3px 3px;background:linear-gradient(90deg,#8a8d90,#5a5d60 80px,#15181b 140px,#17191c 240px,#555 340px,#666);box-shadow:0 0 2px #000;color:#111;font:7px/9px "Liberation Sans",sans-serif}
header{display:flex;height:18px}h2{flex:1;margin:0;font:9px/18px Lato,sans-serif;color:#111;text-shadow:0 0 4px #aaa,0 0 6px #aaa}
header button{width:32px;height:12px;background:linear-gradient(#e0a090,#c2402c 50%,#a02414 50%,#c8503a);border:1px solid #ddd;border-top:0;border-radius:0 0 3px 3px;--s:7px}
.b{flex:1;min-height:0;display:flex;background:#f0f0f0;border:1px solid #ddd;padding:0 8px 0 4px;align-items:flex-start}
ad-logo{margin:53px 6px 0 0}
fieldset{margin:3px 7px 0 0;width:137px;height:132px;border:1px solid #dcdcdc;border-radius:2px;padding:5px 4px 0 6px;min-width:0}
legend{padding:0 1px;margin-left:-1px;height:9px}
.f{display:block;line-height:10px}select{display:block;width:125px;height:14px;font-size:7px;padding:0 2px;border:1px solid #707070;border-radius:2px;background:linear-gradient(#f4f4f4,#d4d4d4);appearance:none;color:#111;line-height:12px}
.s{position:relative}.s svg{position:absolute;right:4px;bottom:5px}
p{margin:10px 0 7px;line-height:9px}.n{display:flex;align-items:center;height:14px;margin-bottom:6px;white-space:nowrap}.n label{display:flex;align-items:center;gap:3px}.n input{width:19px;height:13px;background:#fff;border:1px solid #ddd;padding-left:3px}
.sp{display:flex;flex-direction:column;gap:1px;margin:0 6px 0 2px}.sp button{width:9px;height:6px;border:1px solid #b8b8b8;background:#eee}
.c{display:flex;align-items:center;height:14px;gap:2px}.c input{appearance:none;width:9px;height:9px;border:1px solid #8e8f8f;background:#e8e8e8;box-shadow:inset 0 0 0 1px #f6f6f6}
.k{display:flex;flex-direction:column;gap:4px;padding-top:7px}.k button{width:49px;height:15px;border:1px solid #707070;border-radius:2px;background:linear-gradient(#f4f4f4,#ebebeb 50%,#dadada 50%,#d0d0d0)}.k button:disabled{color:#999;border-color:#bbb;background:#f0f0f0}
footer{display:flex;align-items:center;height:18px;background:#f0f0f0;border-top:1px solid #999;padding:0 7px 0 6px;font:9px/12px Lato,sans-serif}
footer span{width:45px}footer i{flex:1;height:5px;border-radius:2px;background:#2c2c2c;margin-bottom:4px}`,
  `<header><h2>PCB Logo Creator</h2><button aria-label="Close">${ic('close')}</button></header>
   <div class="b"><ad-logo></ad-logo>
   <fieldset><legend>Converter Options</legend>
     <label class="f s">Board Layer :<select><option>Top Layer</option></select><svg width="6" height="3"><path d="M0 0h6L3 3z" fill="#111"/></svg></label>
     <p>Image size : 1055 x 291 mils</p>
     <div class="n"><label>Scaling Factor :<input type="text" value="1"></label><span class="sp"><button aria-label="Up"><svg width="3" height="2"><path d="M0 2h3L1 0z" fill="#335"/></svg></button><button aria-label="Down"><svg width="3" height="2"><path d="M0 0h3L1 2z" fill="#335"/></svg></button></span>(mils/pixels)</div>
     <label class="c"><input type="checkbox">Negative</label><label class="c"><input type="checkbox">Mirror X</label><label class="c"><input type="checkbox">Mirror Y</label>
   </fieldset>
   <div class="k"><button disabled>Load</button><button>Convert</button><button>Exit</button></div></div>
   <footer><span>Ready...</span><i></i></footer>`);

define('ad-app', `:host{display:flex;flex-direction:column;height:100vh;position:relative}
main{flex:1;min-height:0;display:flex;padding:3px 0 0 2px;background:#383838}
.o{position:absolute;inset:0;display:grid;place-items:center;pointer-events:none}ad-ime{position:absolute;right:0;bottom:27px}
.p{position:absolute;left:50%;top:50%;margin:-3px 0 0 -68px}`,
  `<ad-titlebar></ad-titlebar><ad-toolbar></ad-toolbar><ad-menubar></ad-menubar>
   <main><ad-projects></ad-projects><ad-side-tools></ad-side-tools><ad-editor></ad-editor><ad-properties></ad-properties></main>
   <ad-status></ad-status><ad-ime></ad-ime><div class="o"><ad-dialog></ad-dialog></div>
   <svg class="p" width="8" height="13" viewBox="0 0 8 13"><path d="M1 1v10l2-2 2 3 1-1-1-3h3z" fill="#fff" stroke="#222"/></svg>`);
</script>
</body>
</html>
